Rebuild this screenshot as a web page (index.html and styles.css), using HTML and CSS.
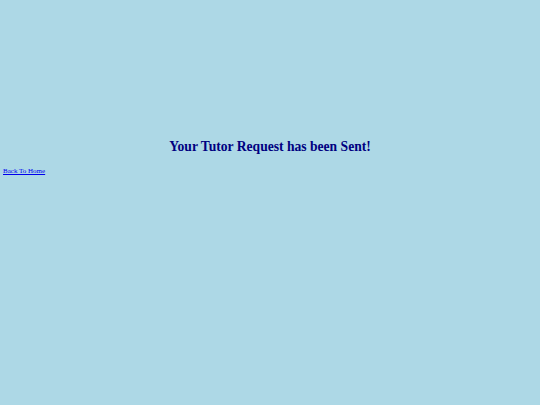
FILE: index.html
```html
<!DOCTYPE html>
<html>
<head>
<meta charset="utf-8">
<link rel="stylesheet" href="styles.css">
</head>
<body class="page">
<h1 class="title">Your Tutor Request has been Sent!</h1>
<a class="home" href="#">Back To Home</a>
</body>
</html>
```
FILE: styles.css
```css
html { background: #ADD8E6; }
.page {
  margin: 0;
  padding: 140px 3px 0;
  background: #ADD8E6;
  font-family: "Liberation Serif", serif;
}
.title {
  margin: 0 0 5px;
  text-align: center;
  color: #000080;
  font-size: 13.6px;
  font-weight: bold;
  line-height: 14px;
}
.home {
  display: inline-block;
  color: #0000EE;
  font-size: 7px;
  line-height: 9px;
  text-decoration: underline;
}
```
